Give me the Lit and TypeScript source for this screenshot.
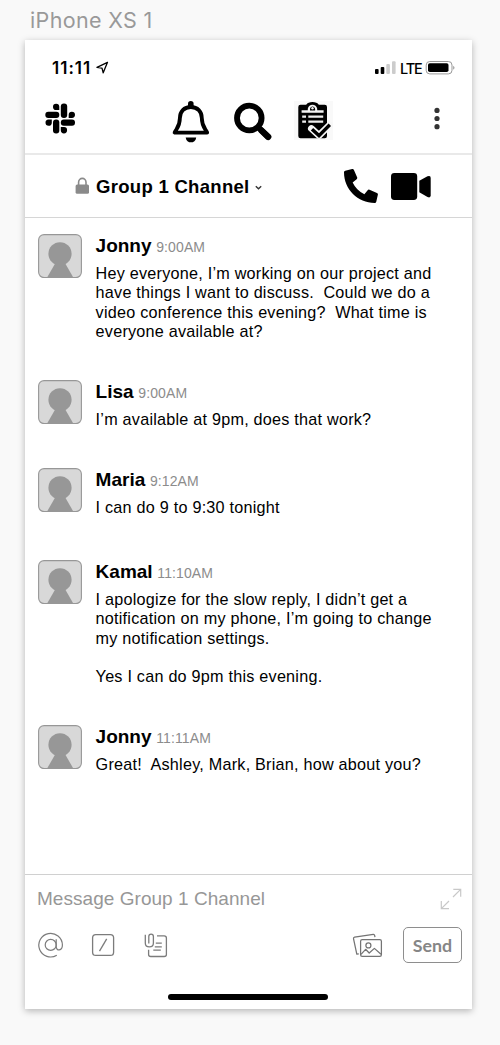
import { LitElement, html, css, svg } from "lit";
import { customElement, property } from "lit/decorators.js";

interface Message {
  name: string;
  time: string;
  lines: string[];
}

const messages: Message[] = [
  {
    name: "Jonny",
    time: "9:00AM",
    lines: [
      "Hey everyone, I’m working on our project and",
      "have things I want to discuss.  Could we do a",
      "video conference this evening?  What time is",
      "everyone available at?",
    ],
  },
  { name: "Lisa", time: "9:00AM", lines: ["I’m available at 9pm, does that work?"] },
  { name: "Maria", time: "9:12AM", lines: ["I can do 9 to 9:30 tonight"] },
  {
    name: "Kamal",
    time: "11:10AM",
    lines: [
      "I apologize for the slow reply, I didn’t get a",
      "notification on my phone, I’m going to change",
      "my notification settings.",
      "",
      "Yes I can do 9pm this evening.",
    ],
  },
  { name: "Jonny", time: "11:11AM", lines: ["Great!  Ashley, Mark, Brian, how about you?"] },
];

const icon = (x: number, y: number, w: number, h: number, content: unknown) => html`
  <svg width=${w} height=${h} viewBox="${x} ${y} ${w} ${h}" fill="none">${content}</svg>
`;

@customElement("chat-message")
export class ChatMessage extends LitElement {
  @property({ attribute: false }) message!: Message;

  static styles = css`
    :host {
      display: flex;
      gap: 13.6px;
    }
    svg {
      display: block;
      flex: none;
    }
    .head {
      height: 30px;
      line-height: 24px;
      display: flex;
      align-items: baseline;
      gap: 4.7px;
      white-space: nowrap;
    }
    .name {
      font-size: 19px;
      font-weight: 700;
    }
    .time {
      font-size: 14px;
      color: #8c8c8c;
      letter-spacing: 0.1px;
    }
    .line {
      font-size: 16.2px;
      line-height: 19.33px;
      height: 19.33px;
      white-space: pre;
      letter-spacing: 0.23px;
    }
  `;

  render() {
    const m = this.message;
    return html`
      ${icon(0, 0, 44, 44, svg`
        <rect x=".6" y=".6" width="42.8" height="43" rx="5.5" fill="#d8d8d8"/>
        <circle cx="22" cy="19.8" r="11.6" fill="#979797"/>
        <path d="M18 28H26.4L35.6 44H8.8Z" fill="#979797"/>
        <rect x=".6" y=".6" width="42.8" height="43" rx="5.5" stroke="#979797" stroke-width="1.1"/>`)}
      <div>
        <div class="head"><span class="name">${m.name}</span><span class="time">${m.time}</span></div>
        ${m.lines.map((l) => html`<div class="line">${l}</div>`)}
      </div>
    `;
  }
}

@customElement("app-root")
export class AppRoot extends LitElement {
  static styles = css`
    :host {
      display: block;
      box-sizing: border-box;
      height: 1045px;
      background: #f9f9f9;
      font-family: "Liberation Sans", Arial, sans-serif;
      color: #000;
      overflow: hidden;
    }
    svg {
      display: block;
      flex: none;
    }
    .title {
      height: 40px;
      box-sizing: border-box;
      padding: 7px 0 0 30px;
      font: 400 21.5px/27px Inter, sans-serif;
      letter-spacing: 0.35px;
      color: #999;
    }
    .phone {
      box-sizing: border-box;
      margin-left: 25px;
      width: 447px;
      height: 969px;
      background: #fff;
      box-shadow: 0 2px 7px rgba(0, 0, 0, 0.28);
      display: flex;
      flex-direction: column;
    }
    .status {
      height: 55px;
      box-sizing: border-box;
      display: flex;
      align-items: center;
      padding: 1px 17px 0 27px;
      font-family: Inter, sans-serif;
    }
    .clock {
      font-size: 17px;
      font-weight: 600;
      width: 43px;
      letter-spacing: 1px;
    }
    .push {
      margin-left: auto;
    }
    .network {
      font-size: 14.5px;
      font-weight: 500;
      width: 25px;
      margin-left: 4px;
      letter-spacing: -1.2px;
    }
    .toolbar {
      height: 60px;
      box-sizing: border-box;
      border-bottom: 2px solid #e9e9e9;
      display: flex;
      align-items: center;
      padding: 0 30px 0 19px;
    }
    .actions {
      display: flex;
      gap: 22px;
      margin-left: 94px;
    }
    .channel {
      height: 63px;
      box-sizing: border-box;
      border-bottom: 1px solid #d6d6d6;
      display: flex;
      align-items: center;
      padding: 0 40px 0 50px;
    }
    .channel-name {
      font-size: 18.5px;
      font-weight: 700;
      letter-spacing: 0.3px;
      margin: 0 4px 0 6px;
      padding-top: 1px;
      white-space: nowrap;
    }
    .calls {
      display: flex;
      gap: 10px;
      margin-left: auto;
    }
    .messages {
      height: 656px;
      box-sizing: border-box;
      padding: 16px 13px 0;
      display: flex;
      flex-direction: column;
      gap: 38.5px;
    }
    .messages chat-message:nth-child(4) {
      margin-top: 4.4px;
    }
    .composer {
      border-top: 1px solid #d0d0d0;
      flex: 1;
    }
    .input {
      height: 47px;
      display: flex;
      align-items: center;
      justify-content: space-between;
      padding: 0 10px 0 12px;
      font-size: 19px;
      letter-spacing: 0.04px;
      color: #979797;
    }
    .tools {
      height: 46px;
      display: flex;
      align-items: center;
      padding: 0 10px 0 12px;
    }
    .left-tools {
      display: flex;
      gap: 26px;
      flex: 1;
    }
    .send {
      box-sizing: border-box;
      width: 59px;
      height: 36px;
      margin-left: 20px;
      border: 1.5px solid #8e8e8e;
      border-radius: 5px;
      background: none;
      padding: 0;
      font: 700 17.8px/34px Lato, sans-serif;
      color: #868686;
    }
    .home {
      width: 160px;
      height: 6px;
      border-radius: 3px;
      background: #000;
      margin: 26px 0 0 143px;
    }
  `;

  render() {
    return html`
      <div class="title">iPhone XS 1</div>
      <div class="phone">
        <div class="status">
          <span class="clock">11:11</span>
          ${icon(95, 60, 15, 16, svg`
            <path d="M107.5 62.3L97 67.4L102 68.2L103.2 72.8Z" stroke="#000" stroke-width="1.3" stroke-linejoin="round"/>`)}
          <div class="push">
            ${icon(375, 60, 21, 16, svg`
              <rect x="375" y="69" width="3.6" height="5" rx="1" fill="#000"/>
              <rect x="380.7" y="67" width="3.6" height="7" rx="1" fill="#000"/>
              <rect x="386.3" y="64" width="3.6" height="10" rx="1" fill="#ccc"/>
              <rect x="392" y="61.3" width="3.6" height="12.7" rx="1" fill="#ccc"/>`)}
          </div>
          <span class="network">LTE</span>
          ${icon(425, 60, 30, 16, svg`
            <rect x="426.2" y="61.5" width="25.8" height="12.4" rx="3.6" stroke="#999" stroke-width="1"/>
            <rect x="428" y="63.3" width="20.5" height="8.8" rx="1.8" fill="#000"/>
            <path d="M453.2 65.7Q455.8 67.7 453.2 69.7Z" fill="#999"/>`)}
        </div>

        <div class="toolbar">
          ${icon(44, 100, 32, 48, svg`<g fill="#000">
            <rect x="45.3" y="111.7" width="14" height="6.3" rx="3"/>
            <rect x="60.8" y="103.5" width="6.4" height="14.5" rx="3"/>
            <rect x="60.8" y="119.5" width="14.2" height="6.2" rx="3"/>
            <rect x="53" y="119.5" width="6.3" height="14" rx="3"/>
            <path d="M59.3 110H56.2A3.15 3.15 0 1 1 59.3 106.8Z"/>
            <path d="M68.7 118V114.8A3.15 3.15 0 1 1 71.9 118Z"/>
            <path d="M51.8 119.5V122.7A3.15 3.15 0 1 1 48.5 119.5Z"/>
            <path d="M60.8 127.1H64A3.15 3.15 0 1 1 60.8 130.3Z"/></g>`)}
          <div class="actions">
            ${icon(170, 100, 42, 48, svg`
              <path d="M190.8 107C184 107 179.9 111.7 179.9 118C179.9 126.5 176.5 128.5 174.6 132.6H207.2C205.2 128.5 201.8 126.5 201.8 118C201.8 111.7 197.6 107 190.8 107Z" stroke="#000" stroke-width="3.8" stroke-linejoin="round"/>
              <path d="M190.8 103.7V106" stroke="#000" stroke-width="5.6" stroke-linecap="round"/>
              <path d="M185.7 137.4H196.2C195.5 144 186.4 144 185.7 137.4Z" fill="#000"/>`)}
            ${icon(234, 100, 38, 48, svg`
              <circle cx="249.3" cy="118" r="12.3" stroke="#000" stroke-width="5.8"/>
              <path d="M258.5 127.5L268.6 137.4" stroke="#000" stroke-width="5.6"/>
              <path d="M261.5 130.5L268.2 136.9" stroke="#000" stroke-width="6.4" stroke-linecap="round"/>`)}
            ${icon(293, 100, 39, 48, svg`
              <rect x="293" y="101" width="39" height="39" fill="#f9f9f9"/>
              <path d="M299.5 104.8H305.2C307 101 316 101 317.8 104.8H323.8Q326 104.8 326 107V136Q326 138.3 323.8 138.3H299.5Q297.3 138.3 297.3 136V107Q297.3 104.8 299.5 104.8Z" fill="#000"/>
              <path d="M300.6 112.7V110.3H306.8V108.7C307.6 103.5 315.4 103.5 316.2 108.7V110.3H322.6V112.7Z" fill="#f4f4f4"/>
              <path d="M309 110.6V109.2C309.2 105.6 313.8 105.6 314.1 109.2V110.6Z" fill="#000"/>
              <circle cx="311.5" cy="108.2" r="1.2" fill="#f4f4f4"/>
              <path d="M301.2 116.7H305M307.3 116.7H322.2M301.2 121.6H305M307.3 121.6H322.2" stroke="#eee" stroke-width="2.3"/>
              <path d="M310.4 128.6L318 135.5L328.8 124.8" stroke="#f7f7f7" stroke-width="6.8" stroke-linejoin="round" stroke-linecap="round"/>
              <path d="M311 129.2L318 135.6L328.8 124.8" stroke="#000" stroke-width="3.4"/>`)}
          </div>
          <div class="push">
            ${icon(432, 100, 10, 48, svg`<g fill="#333">
              <circle cx="437" cy="110.4" r="2.6"/><circle cx="437" cy="118.5" r="2.6"/><circle cx="437" cy="126.7" r="2.6"/></g>`)}
          </div>
        </div>

        <div class="channel">
          ${icon(75, 176, 15, 20, svg`
            <rect x="75.6" y="184.5" width="13.4" height="9.3" rx="1.5" fill="#8a8a8a"/>
            <path d="M78.6 185V182.2A3.7 3.8 0 0 1 86 182.2V185" stroke="#8a8a8a" stroke-width="1.6"/>`)}
          <span class="channel-name">Group 1 Channel</span>
          ${icon(254, 180, 10, 12, svg`
            <path d="M255.8 186.2L258.5 188.8L261.2 186.2" stroke="#333" stroke-width="1.4"/>`)}
          <div class="calls">
            ${icon(344, 168, 35, 36, svg`
              <path transform="translate(344 169) scale(.0662)" fill="#000" d="M497.39 361.8l-112-48a24 24 0 0 0-28 6.9l-49.6 60.6A370.66 370.66 0 0 1 130.6 204.11l60.6-49.6a23.94 23.94 0 0 0 6.9-28l-48-112A24.16 24.16 0 0 0 122.6.61l-104 24A24 24 0 0 0 0 48c0 256.5 207.9 464 464 464a24 24 0 0 0 23.4-18.6l24-104a24.29 24.29 0 0 0-14.01-27.6z"/>`)}
            ${icon(389, 168, 43, 36, svg`
              <rect x="391" y="173" width="26.2" height="27" rx="3.4" fill="#000"/>
              <path d="M419.3 180.7L427.5 176.3Q430.7 175 430.7 178V195.3Q430.7 198.3 427.5 197L419.3 192.3Z" fill="#000"/>`)}
          </div>
        </div>

        <div class="messages">
          ${messages.map((m) => html`<chat-message .message=${m}></chat-message>`)}
        </div>

        <div class="composer">
          <div class="input">
            <span>Message Group 1 Channel</span>
            ${icon(440, 887, 22, 23, svg`
              <path d="M453.3 889.3H460.7V896.7M460.4 889.6L453 897M441.3 901V908.7H449M441.6 908.4L449 901" stroke="#c8c8c8" stroke-width="1.2"/>`)}
          </div>
          <div class="tools">
            <div class="left-tools">
              ${icon(37, 932, 27, 26, svg`<g stroke="#7c7c7c" stroke-width="1.2">
                <circle cx="50.7" cy="944.9" r="5.5"/>
                <path d="M56.2 939.2V946.5C56.2 951.5 62.4 951 62.4 945A11.8 11.8 0 1 0 56.8 955.2"/></g>`)}
              ${icon(90, 932, 26, 26, svg`<g stroke="#7c7c7c" stroke-width="1.3">
                <rect x="92.6" y="934.6" width="21" height="20.8" rx="3.2"/>
                <path d="M106.7 938.8L99.5 951.2"/></g>`)}
              ${icon(142, 932, 27, 26, svg`<g stroke="#7c7c7c" stroke-width="1.3">
                <path d="M157 935.8H164.2Q166.4 935.8 166.4 938V954.4Q166.4 956.5 164.2 956.5H150.7Q148.6 956.5 148.6 954.4V949.8"/>
                <path d="M145.3 934.8V943C145.3 948.2 153.4 948.2 153.4 943V936.4C153.4 933.4 148.8 933.4 148.8 936.4V943.6"/>
                <path d="M155.8 943.2H161.8M154.8 946.8H161.8M153.3 950.2H160.8"/></g>`)}
            </div>
            ${icon(352, 932, 31, 26, svg`<g stroke="#747474" stroke-width="1.25" stroke-linejoin="round">
              <rect x="360.6" y="939.6" width="20.8" height="16.7" rx="1.6"/>
              <circle cx="368.4" cy="945.4" r="2.5"/>
              <path d="M361 954.3L365.6 949.3L369.2 953L374.4 948.4L381 954.3"/>
              <path d="M358.8 953.9L356.8 954.1L353.5 938.6Q353.4 937.3 354.6 937.1L373.3 934.3Q374.4 934.2 374.6 935.3L375 937.2"/></g>`)}
            <button class="send">Send</button>
          </div>
          <div class="home"></div>
        </div>
      </div>
    `;
  }
}
